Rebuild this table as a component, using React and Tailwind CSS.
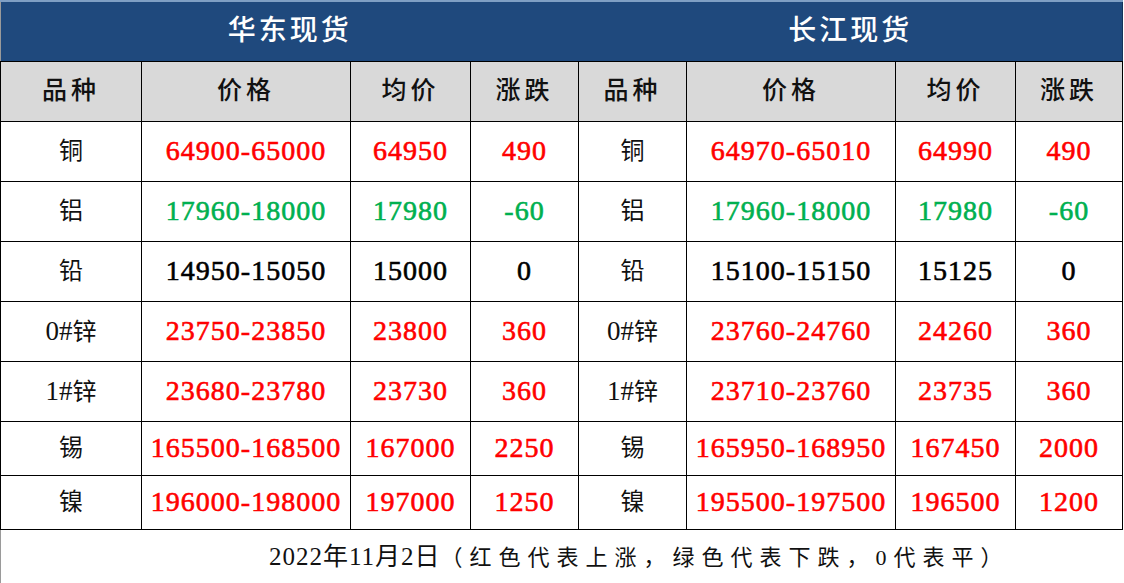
const rowsLeft = [
  { name: '铜', price: '64900-65000', avg: '64950', chg: '490', c: 'red' },
  { name: '铝', price: '17960-18000', avg: '17980', chg: '-60', c: 'green' },
  { name: '铅', price: '14950-15050', avg: '15000', chg: '0', c: 'black' },
  { name: '0#锌', price: '23750-23850', avg: '23800', chg: '360', c: 'red' },
  { name: '1#锌', price: '23680-23780', avg: '23730', chg: '360', c: 'red' },
  { name: '锡', price: '165500-168500', avg: '167000', chg: '2250', c: 'red' },
  { name: '镍', price: '196000-198000', avg: '197000', chg: '1250', c: 'red' },
];

const rowsRight = [
  { name: '铜', price: '64970-65010', avg: '64990', chg: '490', c: 'red' },
  { name: '铝', price: '17960-18000', avg: '17980', chg: '-60', c: 'green' },
  { name: '铅', price: '15100-15150', avg: '15125', chg: '0', c: 'black' },
  { name: '0#锌', price: '23760-24760', avg: '24260', chg: '360', c: 'red' },
  { name: '1#锌', price: '23710-23760', avg: '23735', chg: '360', c: 'red' },
  { name: '锡', price: '165950-168950', avg: '167450', chg: '2000', c: 'red' },
  { name: '镍', price: '195500-197500', avg: '196500', chg: '1200', c: 'red' },
];

const colorClass = {
  red: 'text-[#ff0000]',
  green: 'text-[#00b050]',
  black: 'text-black',
};

const serif = "font-['Liberation_Serif','Noto_Sans_CJK_SC',serif]";

function NameCell({ name }) {
  // "0#锌" style names: latin part a bit larger, like the Song-style original
  const m = name.match(/^(\d#)(.+)$/);
  return (
    <td className={`border border-black text-center text-[24px] text-[#111] ${serif}`}>
      {m ? (
        <>
          <span className="text-[27px]">{m[1]}</span>
          {m[2]}
        </>
      ) : (
        name
      )}
    </td>
  );
}

function NumCell({ children, c }) {
  return (
    <td className={`border border-black text-center text-[28px] tracking-[1px] [-webkit-text-stroke:0.6px] ${serif} ${colorClass[c]}`}>
      {children}
    </td>
  );
}

export default function App() {
  const heights = ['h-[60px]', 'h-[60px]', 'h-[60px]', 'h-[60px]', 'h-[60px]', 'h-[54px]', 'h-[54px]'];
  return (
    <div className="w-[1124px] h-[583px] bg-white overflow-hidden">
      <table className="table-fixed border-collapse w-[1122px] border-l border-l-[#9a9a9a]">
        <colgroup>
          <col className="w-[141px]" />
          <col className="w-[209px]" />
          <col className="w-[120px]" />
          <col className="w-[108px]" />
          <col className="w-[108px]" />
          <col className="w-[209px]" />
          <col className="w-[120px]" />
          <col className="w-[107px]" />
        </colgroup>
        <tbody>
          {/* title row */}
          <tr className="h-[60px] bg-[#1f497d] border-t-2 border-t-[#7f9fc4]">
            <td colSpan={4} className={`text-center text-white text-[28px] font-medium tracking-[3px] border-b border-b-black ${serif}`}>
              华东现货
            </td>
            <td colSpan={4} className={`text-center text-white text-[28px] font-medium tracking-[3px] border-b border-b-black border-r border-r-[#15345a] ${serif}`}>
              长江现货
            </td>
          </tr>

          {/* column headers */}
          <tr className="h-[60px] bg-[#d9d9d9]">
            {['品种', '价格', '均价', '涨跌', '品种', '价格', '均价', '涨跌'].map((h, i) => (
              <td key={i} className={`border border-black text-center text-[25px] font-medium tracking-[4px] text-[#111] ${serif}`}>
                {h}
              </td>
            ))}
          </tr>

          {rowsLeft.map((l, i) => {
            const r = rowsRight[i];
            return (
              <tr key={i} className={heights[i]}>
                <NameCell name={l.name} />
                <NumCell c={l.c}>{l.price}</NumCell>
                <NumCell c={l.c}>{l.avg}</NumCell>
                <NumCell c={l.c}>{l.chg}</NumCell>
                <NameCell name={r.name} />
                <NumCell c={r.c}>{r.price}</NumCell>
                <NumCell c={r.c}>{r.avg}</NumCell>
                <NumCell c={r.c}>{r.chg}</NumCell>
              </tr>
            );
          })}

          {/* footer note */}
          <tr className="h-[55px]">
            <td colSpan={8} className={`border-b border-b-black pl-[268px] text-left text-[#111] ${serif}`}>
              <span className="text-[25px] tracking-[1px]">2022年11月2日</span>
              <span className="text-[22px] tracking-[7px]">（红色代表上涨，绿色代表下跌，0代表平）</span>
            </td>
          </tr>
        </tbody>
      </table>
    </div>
  );
}
